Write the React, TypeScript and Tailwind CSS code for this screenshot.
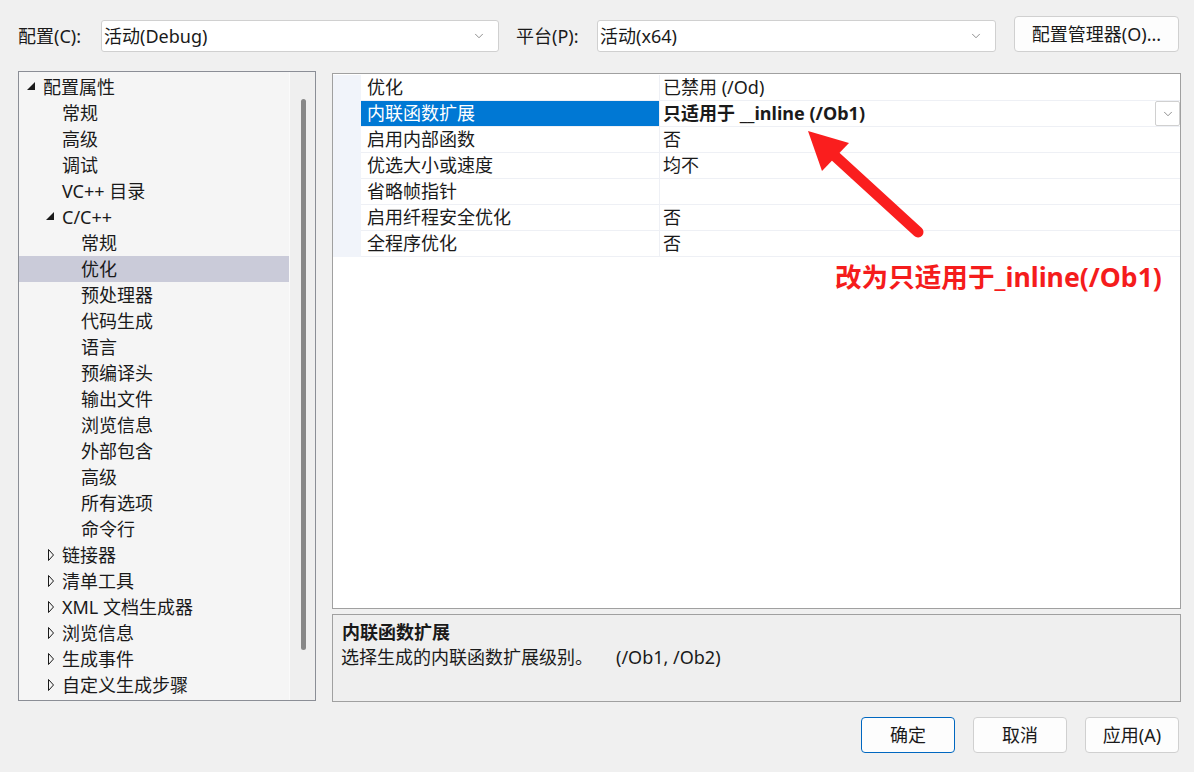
import { ChevronDown } from "lucide-react";

type TreeItem = { t: string; lvl: number; exp?: "open" | "closed"; sel?: boolean };

const treeItems: TreeItem[] = [
  { t: "配置属性", lvl: 0, exp: "open" },
  { t: "常规", lvl: 1 },
  { t: "高级", lvl: 1 },
  { t: "调试", lvl: 1 },
  { t: "VC++ 目录", lvl: 1 },
  { t: "C/C++", lvl: 1, exp: "open" },
  { t: "常规", lvl: 2 },
  { t: "优化", lvl: 2, sel: true },
  { t: "预处理器", lvl: 2 },
  { t: "代码生成", lvl: 2 },
  { t: "语言", lvl: 2 },
  { t: "预编译头", lvl: 2 },
  { t: "输出文件", lvl: 2 },
  { t: "浏览信息", lvl: 2 },
  { t: "外部包含", lvl: 2 },
  { t: "高级", lvl: 2 },
  { t: "所有选项", lvl: 2 },
  { t: "命令行", lvl: 2 },
  { t: "链接器", lvl: 1, exp: "closed" },
  { t: "清单工具", lvl: 1, exp: "closed" },
  { t: "XML 文档生成器", lvl: 1, exp: "closed" },
  { t: "浏览信息", lvl: 1, exp: "closed" },
  { t: "生成事件", lvl: 1, exp: "closed" },
  { t: "自定义生成步骤", lvl: 1, exp: "closed" },
];

const indent = ["pl-[8px]", "pl-[27px]", "pl-[46px]"];

const props: { name: string; value: string; sel?: boolean }[] = [
  { name: "优化", value: "已禁用 (/Od)" },
  { name: "内联函数扩展", value: "只适用于 __inline (/Ob1)", sel: true },
  { name: "启用内部函数", value: "否" },
  { name: "优选大小或速度", value: "均不" },
  { name: "省略帧指针", value: "" },
  { name: "启用纤程安全优化", value: "否" },
  { name: "全程序优化", value: "否" },
];

function Combo({ value, width }: { value: string; width: string }) {
  return (
    <div
      className={`${width} h-[32px] flex items-center bg-white border border-[#d0d0d0] rounded-[3px] pl-[2px] pr-[12px]`}
    >
      <span className="flex-1">{value}</span>
      <ChevronDown size={14} strokeWidth={1.2} className="text-[#606060]" />
    </div>
  );
}

function Arrow({ exp }: { exp?: "open" | "closed" }) {
  if (exp === "open")
    return (
      <svg width="16" height="12" className="shrink-0 -mt-[3px]">
        <polygon points="0,10 8,10 8,2" fill="#1a1a1a" />
      </svg>
    );
  if (exp === "closed")
    return (
      <svg width="16" height="14" className="shrink-0">
        <polygon points="2.5,1.5 7.5,7 2.5,12.5" fill="none" stroke="#1a1a1a" strokeWidth="1" />
      </svg>
    );
  return <span className="w-[16px] shrink-0" />;
}

function Button({ label, primary }: { label: string; primary?: boolean }) {
  return (
    <button
      className={`w-[94px] h-[36px] rounded-[4px] bg-[#fdfdfd] border ${
        primary ? "border-[#0067c0]" : "border-[#d0d0d0]"
      }`}
    >
      {label}
    </button>
  );
}

export default function App() {
  return (
    <div className="relative w-[1194px] h-[772px] bg-[#f0f0f0] text-[18px] text-[#1a1a1a] font-['Noto_Sans','Noto_Sans_CJK_SC',sans-serif] flex flex-col overflow-hidden">
      {/* top bar */}
      <div className="flex items-end pl-[18px] pt-[16px] h-[52px]">
        <span className="w-[83px] h-[32px] leading-[32px]">配置(C):</span>
        <Combo value="活动(Debug)" width="w-[398px]" />
        <span className="ml-[17px] w-[81px] h-[32px] leading-[32px]">平台(P):</span>
        <Combo value="活动(x64)" width="w-[399px]" />
        <button className="ml-[18px] w-[165px] h-[36px] rounded-[4px] bg-[#fdfdfd] border border-[#d0d0d0]">
          配置管理器(O)...
        </button>
      </div>

      {/* main */}
      <div className="flex pl-[18px] mt-[19px] h-[631px]">
        {/* tree */}
        <div className="w-[298px] h-[630px] border border-[#8b8e96] bg-[#f5f5f5] flex">
          <div className="flex-1 pt-[2px] flex flex-col">
            {treeItems.map((it, i) => (
              <div
                key={i}
                className={`h-[26px] flex items-center ${indent[it.lvl]} ${it.sel ? "bg-[#cacbd9]" : ""}`}
              >
                <Arrow exp={it.exp} />
                <span className="whitespace-nowrap">{it.t}</span>
              </div>
            ))}
          </div>
          <div className="w-[26px] bg-[#efefef] border-l border-[#fafafa] flex justify-center pt-[27px]">
            <div className="w-[5px] h-[551px] ml-[2px] rounded-full bg-[#888888]" />
          </div>
        </div>

        {/* right column */}
        <div className="ml-[16px] w-[849px] flex flex-col pt-[2px]">
          <div className="h-[537px] bg-white border border-[#a0a0a0] pt-[1px]">
            <div className="flex">
              <div className="w-[28px] bg-[#f1f4fa]" />
              <div className="flex-1 flex flex-col">
                {props.map((p, i) => (
                  <div key={i} className="h-[26px] flex border-b border-[#eef0f5]">
                    <div
                      className={`w-[298px] pl-[6px] leading-[25px] whitespace-nowrap ${
                        p.sel ? "bg-[#0078d4] text-white" : ""
                      }`}
                    >
                      {p.name}
                    </div>
                    <div className="flex-1 flex border-l border-[#eef0f5] pl-[3px]">
                      <span className={`flex-1 leading-[25px] whitespace-nowrap ${p.sel ? "font-bold" : ""}`}>
                        {p.value}
                      </span>
                      {p.sel && (
                        <div className="w-[25px] h-[25px] border border-[#d0d0d0] rounded-[2px] bg-white flex items-center justify-center">
                          <ChevronDown size={14} strokeWidth={1.2} className="text-[#606060]" />
                        </div>
                      )}
                    </div>
                  </div>
                ))}
              </div>
            </div>
          </div>
          <div className="mt-[5px] h-[88px] bg-[#efefef] border border-[#a0a0a0] pl-[9px] pt-[5px] leading-[25px]">
            <div className="font-bold">内联函数扩展</div>
            <div className="-ml-[1px] whitespace-nowrap">
              选择生成的内联函数扩展级别。
              <span className="ml-[23px]">(/Ob1, /Ob2)</span>
            </div>
          </div>
        </div>
      </div>

      {/* buttons */}
      <div className="flex justify-end gap-[18px] pr-[15px] mt-[15px]">
        <Button label="确定" primary />
        <Button label="取消" />
        <Button label="应用(A)" />
      </div>

      {/* annotation overlay */}
      <svg className="absolute left-0 top-0 pointer-events-none" width="1194" height="772">
        <line x1="918" y1="232" x2="836" y2="157" stroke="#fa1e1e" strokeWidth="11" strokeLinecap="round" />
        <polygon points="808,131 849,143 822,171" fill="#fa1e1e" />
      </svg>
      <div className="absolute left-[835px] top-[261px] text-[26.6px] leading-[32px] font-bold text-[#f51c1c] whitespace-nowrap">
        改为只适用于_inline(/Ob1)
      </div>
    </div>
  );
}
